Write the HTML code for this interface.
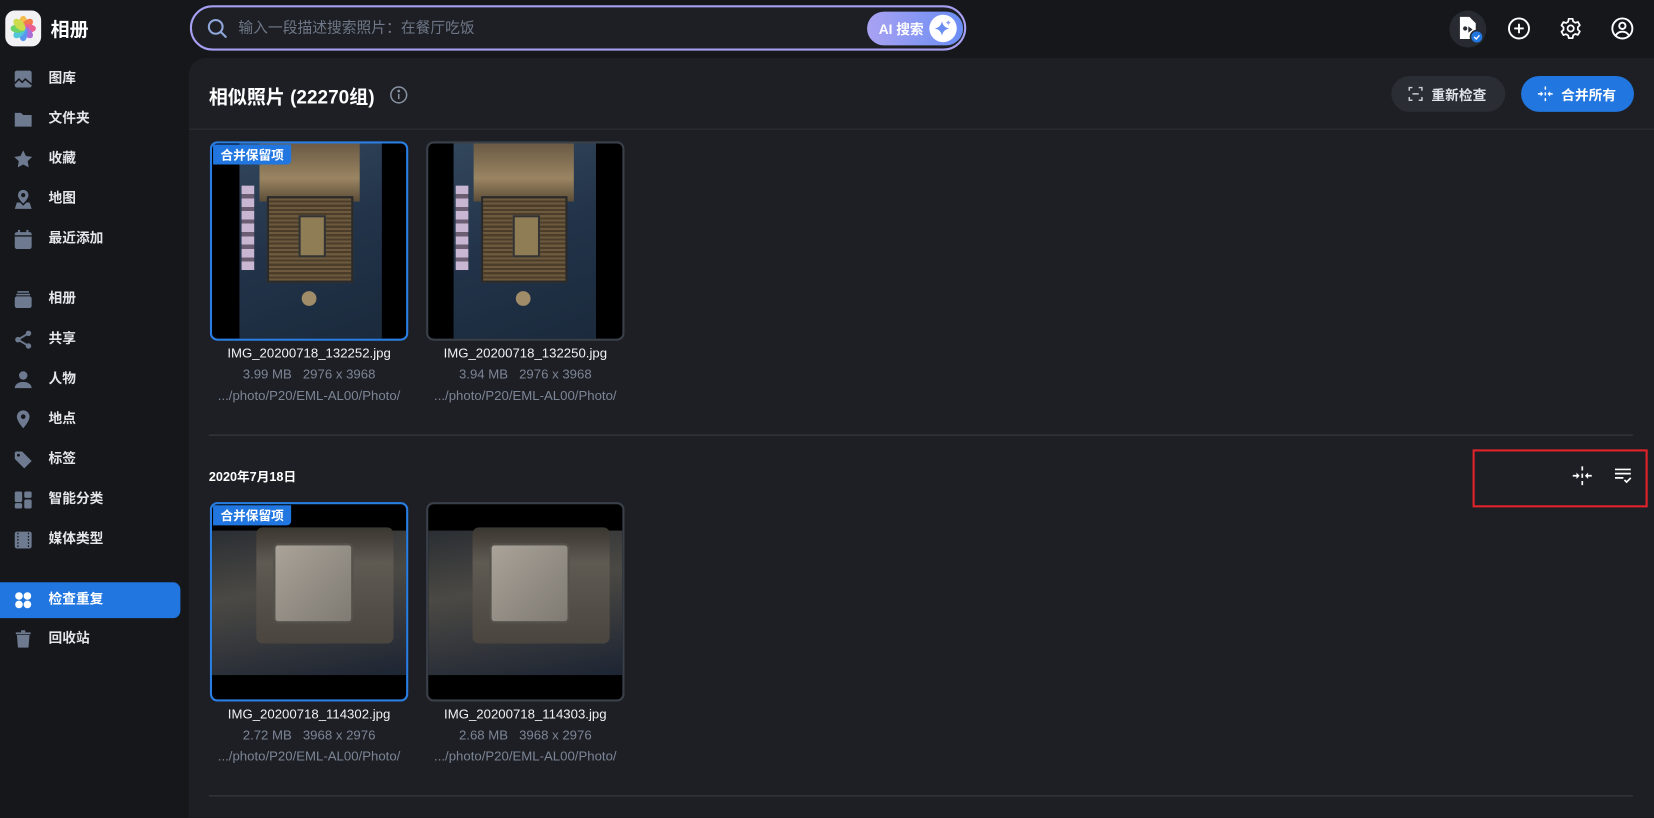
<!DOCTYPE html>
<html><head><meta charset="utf-8"><style>
*{box-sizing:border-box;margin:0;padding:0}
html,body{width:1654px;height:807px;overflow:hidden;background:#15171b}
#w{position:absolute;left:0;top:0;width:1568px;height:765px;transform:scale(1.05485);transform-origin:0 0;background:#15171b;font-family:"Liberation Sans","Noto Sans CJK SC",sans-serif;color:#e8eaee}
.a{position:absolute}
.nav{position:absolute;left:0;width:171px;height:34px;display:flex;align-items:center;font-size:13px;font-weight:bold;color:#e3e6ea}
.nav svg{position:absolute;left:12px;top:7px}
.nav span{position:absolute;left:46px;top:7px;line-height:18px}
.card{position:absolute;width:188px;height:189px;border:2px solid #3a404a;border-radius:7px;background:#000;overflow:hidden}
.card.sel{border-color:#2a7de1}
.badge{position:absolute;left:1px;top:1px;background:#2176e0;color:#fff;font-size:12px;font-weight:bold;padding:1px 7px;border-radius:0 0 4px 0;z-index:2}
.cap{position:absolute;width:220px;text-align:center;font-size:12.5px;line-height:20px}
.cap .n{color:#f0f2f5}
.cap .m{color:#7c8596}
.mb{position:absolute;background:linear-gradient(160deg,#32465c 0%,#223349 50%,#1b2a3c 100%)}
.sock{position:absolute;background:repeating-linear-gradient(0deg,#6d5a3e 0 2px,#4b3d2a 2px 4px),#5a4a33;border:2px solid #2a2a2a}
.cpu{position:absolute;background:linear-gradient(180deg,#3a3630,#5f5a52 30%,#4a463f)}
</style></head><body><div id="w">

<div class="a" style="left:5px;top:10px;width:34px;height:34px;border-radius:9px;background:#f2f2f4"></div>
<svg class="a" style="left:9px;top:14px" width="26" height="26" viewBox="0 0 26 26">
<g transform="translate(13 13)" opacity=".9">
<ellipse rx="4" ry="7" cy="-5" fill="#f6b73c"/>
<ellipse rx="4" ry="7" cy="-5" fill="#f36d3a" transform="rotate(45)"/>
<ellipse rx="4" ry="7" cy="-5" fill="#e94e8a" transform="rotate(90)"/>
<ellipse rx="4" ry="7" cy="-5" fill="#a35fd6" transform="rotate(135)"/>
<ellipse rx="4" ry="7" cy="-5" fill="#4a8ff0" transform="rotate(180)"/>
<ellipse rx="4" ry="7" cy="-5" fill="#3fc2d8" transform="rotate(225)"/>
<ellipse rx="4" ry="7" cy="-5" fill="#5fcf5a" transform="rotate(270)"/>
<ellipse rx="4" ry="7" cy="-5" fill="#c8d83a" transform="rotate(315)"/>
</g></svg>
<div class="a" style="left:48px;top:14px;font-size:18px;font-weight:bold;color:#fff">相册</div>

<div class="a" style="left:180px;top:5px;width:736px;height:43px;border:2px solid #a6a0f2;border-radius:22px;background:#1d1f24"></div>
<svg class="a" style="left:196px;top:17px" width="20" height="20" viewBox="0 0 20 20"><circle cx="8.5" cy="8.5" r="6.5" fill="none" stroke="#8fa6d8" stroke-width="2"/><path d="M13.5 13.5L18 18" stroke="#8fa6d8" stroke-width="2" stroke-linecap="round"/></svg>
<div class="a" style="left:226px;top:16px;font-size:14px;color:#6f7888">输入一段描述搜索照片：在餐厅吃饭</div>
<div class="a" style="left:822px;top:11px;width:91px;height:32px;border-radius:16px;background:linear-gradient(90deg,#a9a2f2,#6a8df4)"></div>
<div class="a" style="left:833px;top:17px;font-size:13px;font-weight:bold;color:#fff">AI 搜索</div>
<div class="a" style="left:881px;top:14px;width:26px;height:26px;border-radius:13px;background:#fff"></div>
<svg class="a" style="left:885px;top:18px" width="18" height="18" viewBox="0 0 18 18"><path d="M8 2Q9 8 15 9Q9 10 8 16Q7 10 1 9Q7 8 8 2Z" fill="#6a8df4"/><path d="M14 1Q14.5 3 16.5 3.5Q14.5 4 14 6Q13.5 4 11.5 3.5Q13.5 3 14 1Z" fill="#8f9cf3"/></svg>

<div class="a" style="left:1374px;top:10px;width:35px;height:35px;border-radius:18px;background:#272a30"></div>
<svg class="a" style="left:1382px;top:15px" width="26" height="28" viewBox="0 0 26 28"><path d="M2 1h9l6 6v15H2z" fill="#fff"/><circle cx="7" cy="12" r="2" fill="#272a30"/><path d="M10 10l4 3-4 3z" fill="#272a30"/><circle cx="18" cy="20" r="6" fill="#2176e0" stroke="#272a30" stroke-width="1.5"/><path d="M15.5 20l2 2 3-3.5" stroke="#fff" stroke-width="1.3" fill="none"/></svg>
<svg class="a" style="left:1429px;top:16px" width="22" height="22" viewBox="0 0 22 22" fill="none" stroke="#fff" stroke-width="1.8"><circle cx="11" cy="11" r="9.5"/><path d="M11 6.5v9M6.5 11h9"/></svg>
<svg class="a" style="left:1478px;top:16px" width="22" height="22" viewBox="0 0 24 24" fill="none" stroke="#fff" stroke-width="1.8"><path d="M10 2h4l.6 2.8 2.2 1.3 2.7-.9 2 3.5-2.1 1.9v2.6l2.1 1.9-2 3.5-2.7-.9-2.200 1.3L14 22h-4l-.6-2.8-2.2-1.3-2.7.9-2-3.5 2.1-1.9v-2.6L2.5 8.9l2-3.5 2.7.9 2.2-1.3z" stroke-linejoin="round"/><circle cx="12" cy="12" r="3.2"/></svg>
<svg class="a" style="left:1527px;top:16px" width="22" height="22" viewBox="0 0 22 22" fill="none" stroke="#fff" stroke-width="1.8"><circle cx="11" cy="11" r="9.5"/><circle cx="11" cy="8.5" r="3"/><path d="M4.8 17.5c1.5-2.5 3.5-3.5 6.2-3.5s4.7 1 6.2 3.5"/></svg>

<div class="nav" style="top:58px"><svg width="20" height="20" viewBox="0 0 20 20"><rect x="2" y="2" width="16" height="16" rx="2" fill="#6d7a90"/><path d="M2 14l4-4 3 3 3-3 6 5" stroke="#15171b" stroke-width="1.5" fill="none"/></svg><span>图库</span></div>
<div class="nav" style="top:96px"><svg width="20" height="20" viewBox="0 0 20 20"><path d="M2 4h6l2 2h8v11H2z" fill="#6d7a90"/></svg><span>文件夹</span></div>
<div class="nav" style="top:134px"><svg width="20" height="20" viewBox="0 0 20 20"><path d="M10 1.5l2.6 5.4 5.9.8-4.3 4.1 1 5.9L10 14.9l-5.2 2.8 1-5.9L1.5 7.7l5.9-.8z" fill="#6d7a90"/></svg><span>收藏</span></div>
<div class="nav" style="top:172px"><svg width="20" height="20" viewBox="0 0 20 20"><path d="M10 1a5 5 0 0 1 5 5c0 3.5-5 8-5 8S5 9.5 5 6a5 5 0 0 1 5-5z" fill="#6d7a90"/><circle cx="10" cy="6" r="2" fill="#15171b"/><path d="M2 19l2-6h3l3 3 3-3h3l2 6z" fill="#6d7a90"/></svg><span>地图</span></div>
<div class="nav" style="top:210px"><svg width="20" height="20" viewBox="0 0 20 20"><rect x="2" y="3" width="16" height="16" rx="2" fill="#6d7a90"/><rect x="5" y="1" width="2" height="4" fill="#6d7a90"/><rect x="13" y="1" width="2" height="4" fill="#6d7a90"/><rect x="2" y="6" width="16" height="1.3" fill="#15171b"/></svg><span>最近添加</span></div>
<div class="nav" style="top:267px"><svg width="20" height="20" viewBox="0 0 20 20"><rect x="2" y="7" width="16" height="11" rx="2" fill="#6d7a90"/><rect x="3.5" y="4.5" width="13" height="1.5" fill="#6d7a90"/><rect x="4.5" y="2" width="11" height="1.5" fill="#6d7a90"/></svg><span>相册</span></div>
<div class="nav" style="top:305px"><svg width="20" height="20" viewBox="0 0 20 20"><circle cx="15" cy="4" r="2.6" fill="#6d7a90"/><circle cx="5" cy="10" r="2.6" fill="#6d7a90"/><circle cx="15" cy="16" r="2.6" fill="#6d7a90"/><path d="M15 4L5 10l10 6" stroke="#6d7a90" stroke-width="1.8" fill="none"/></svg><span>共享</span></div>
<div class="nav" style="top:343px"><svg width="20" height="20" viewBox="0 0 20 20"><circle cx="10" cy="6" r="4" fill="#6d7a90"/><path d="M2 18c0-4 4-6 8-6s8 2 8 6z" fill="#6d7a90"/></svg><span>人物</span></div>
<div class="nav" style="top:381px"><svg width="20" height="20" viewBox="0 0 20 20"><path d="M10 1a6 6 0 0 1 6 6c0 4.5-6 11-6 11S4 11.5 4 7a6 6 0 0 1 6-6z" fill="#6d7a90"/><circle cx="10" cy="7" r="2.2" fill="#15171b"/></svg><span>地点</span></div>
<div class="nav" style="top:419px"><svg width="20" height="20" viewBox="0 0 20 20"><path d="M2 3v6l9 9 7-7-9-9H3z" fill="#6d7a90"/><circle cx="5.5" cy="5.5" r="1.4" fill="#15171b"/></svg><span>标签</span></div>
<div class="nav" style="top:457px"><svg width="20" height="20" viewBox="0 0 20 20"><rect x="2" y="2" width="7" height="10" rx="1.5" fill="#6d7a90"/><rect x="11" y="2" width="7" height="6" rx="1.5" fill="#6d7a90"/><rect x="2" y="13" width="7" height="5" rx="1.5" fill="#6d7a90"/><rect x="11" y="9.5" width="7" height="8.5" rx="1.5" fill="#6d7a90"/></svg><span>智能分类</span></div>
<div class="nav" style="top:495px"><svg width="20" height="20" viewBox="0 0 20 20"><rect x="2" y="2" width="16" height="16" rx="2" fill="#6d7a90"/><path d="M5 3v14M15 3v14" stroke="#15171b" stroke-width="1.2" stroke-dasharray="1.5 1.5"/></svg><span>媒体类型</span></div>
<div class="nav" style="top:552px;background:#2176e0;border-radius:0 7px 7px 0;color:#fff"><svg width="20" height="20" viewBox="0 0 20 20" fill="#fff"><circle cx="6" cy="6" r="3.6"/><circle cx="14" cy="6" r="3.6"/><circle cx="6" cy="14" r="3.6"/><circle cx="14" cy="14" r="3.6"/></svg><span>检查重复</span></div>
<div class="nav" style="top:589px"><svg width="20" height="20" viewBox="0 0 20 20"><path d="M4 6h12l-1 12H5z" fill="#6d7a90"/><rect x="3" y="3.5" width="14" height="1.8" fill="#6d7a90"/><rect x="8" y="1.5" width="4" height="2" fill="#6d7a90"/></svg><span>回收站</span></div>

<div class="a" style="left:179px;top:55px;width:1389px;height:720px;background:#1d1f24;border-radius:16px 0 0 0"></div>
<div class="a" style="left:198px;top:78px;font-size:18px;font-weight:bold;color:#fff">相似照片 (22270组)</div>
<svg class="a" style="left:369px;top:81px" width="18" height="18" viewBox="0 0 18 18" fill="none" stroke="#8a93a3" stroke-width="1.4"><circle cx="9" cy="9" r="7.5"/><path d="M9 8v5"/><circle cx="9" cy="5.3" r=".6" fill="#8a93a3"/></svg>
<div class="a" style="left:1319px;top:72px;width:108px;height:34px;border-radius:17px;background:#2a2d33"></div>
<svg class="a" style="left:1335px;top:82px" width="14" height="14" viewBox="0 0 14 14" fill="none" stroke="#c8ccd3" stroke-width="1.4"><path d="M1 4V1h3M10 1h3v3M13 10v3h-3M4 13H1v-3M4 7h6"/></svg>
<div class="a" style="left:1357px;top:80px;font-size:13px;font-weight:bold;color:#e0e3e8">重新检查</div>
<div class="a" style="left:1442px;top:72px;width:107px;height:34px;border-radius:17px;background:#2176e0"></div>
<svg class="a" style="left:1457px;top:82px" width="16" height="14" viewBox="0 0 16 14" fill="#fff"><rect x="7.3" y="0" width="1.4" height="3"/><rect x="7.3" y="5.5" width="1.4" height="3"/><rect x="7.3" y="11" width="1.4" height="3"/><path d="M1 6.3h2.5V4.5L6 7 3.5 9.5V7.7H1zM15 6.3h-2.5V4.5L10 7l2.5 2.5V7.7H15z"/></svg>
<div class="a" style="left:1480px;top:80px;font-size:13px;font-weight:bold;color:#fff">合并所有</div>
<div class="a" style="left:179px;top:122px;width:1389px;height:1px;background:#2c2f35"></div>

<div class="card sel" style="left:199px;top:134px"><div class="badge">合并保留项</div>
<div class="mb" style="left:26px;top:0;width:135px;height:185px"></div>
<div class="a" style="left:45px;top:0;width:95px;height:55px;background:linear-gradient(180deg,#6a5a44,#9a8562 60%,#5c4d38)"></div>
<div class="sock" style="left:52px;top:50px;width:82px;height:82px"></div>
<div class="a" style="left:82px;top:68px;width:26px;height:40px;background:#8f7d55;border:2px solid #333"></div>
<div class="a" style="left:28px;top:40px;width:12px;height:80px;background:repeating-linear-gradient(180deg,#c9b6d2 0 8px,#6b5e72 8px 12px)"></div>
<div class="a" style="left:85px;top:140px;width:14px;height:14px;border-radius:7px;background:#a08c68"></div>
</div>
<div class="card" style="left:404px;top:134px">
<div class="mb" style="left:24px;top:0;width:135px;height:185px"></div>
<div class="a" style="left:43px;top:0;width:95px;height:55px;background:linear-gradient(180deg,#6a5a44,#9a8562 60%,#5c4d38)"></div>
<div class="sock" style="left:50px;top:50px;width:82px;height:82px"></div>
<div class="a" style="left:80px;top:68px;width:26px;height:40px;background:#8f7d55;border:2px solid #333"></div>
<div class="a" style="left:26px;top:40px;width:12px;height:80px;background:repeating-linear-gradient(180deg,#c9b6d2 0 8px,#6b5e72 8px 12px)"></div>
<div class="a" style="left:83px;top:140px;width:14px;height:14px;border-radius:7px;background:#a08c68"></div>
</div>
<div class="cap" style="left:183px;top:325px"><div class="n">IMG_20200718_132252.jpg</div><div class="m">3.99 MB &nbsp; 2976 x 3968</div><div class="m">.../photo/P20/EML-AL00/Photo/</div></div>
<div class="cap" style="left:388px;top:325px"><div class="n">IMG_20200718_132250.jpg</div><div class="m">3.94 MB &nbsp; 2976 x 3968</div><div class="m">.../photo/P20/EML-AL00/Photo/</div></div>
<div class="a" style="left:198px;top:412px;width:1350px;height:1px;background:#3a3d44"></div>

<div class="a" style="left:198px;top:443px;font-size:12px;font-weight:bold;color:#fff">2020年7月18日</div>
<div class="a" style="left:1396px;top:426px;width:166px;height:55px;border:2px solid #e0232a"></div>
<svg class="a" style="left:1490px;top:442px" width="20" height="18" viewBox="0 0 20 18" fill="#fff"><rect x="9.2" y="0" width="1.6" height="4"/><rect x="9.2" y="7" width="1.6" height="4"/><rect x="9.2" y="14" width="1.6" height="4"/><path d="M1 8.2h3.5V6L7.5 9 4.5 12V9.8H1zM19 8.2h-3.5V6L12.5 9l3 3V9.8H19z"/></svg>
<svg class="a" style="left:1530px;top:443px" width="18" height="16" viewBox="0 0 18 16" fill="none" stroke="#fff" stroke-width="1.6"><path d="M1 2h15M1 6h15M1 10h8M10 12l2 2 4-4"/></svg>

<div class="card sel" style="left:199px;top:476px"><div class="badge">合并保留项</div>
<div class="a" style="left:0;top:25px;width:184px;height:137px;background:linear-gradient(170deg,#2a2e33,#4b4944 40%,#2c3038 80%,#1d2533)"></div>
<div class="cpu" style="left:42px;top:22px;width:130px;height:110px;border-radius:6px"></div>
<div class="a" style="left:58px;top:37px;width:76px;height:76px;border-radius:5px;background:linear-gradient(135deg,#a9a399,#7f7a72);border:2px solid #55524c"></div>
</div>
<div class="card" style="left:404px;top:476px">
<div class="a" style="left:0;top:25px;width:184px;height:137px;background:linear-gradient(170deg,#2a2e33,#4b4944 40%,#2c3038 80%,#1d2533)"></div>
<div class="cpu" style="left:42px;top:22px;width:130px;height:110px;border-radius:6px"></div>
<div class="a" style="left:58px;top:37px;width:76px;height:76px;border-radius:5px;background:linear-gradient(135deg,#a9a399,#7f7a72);border:2px solid #55524c"></div>
</div>
<div class="cap" style="left:183px;top:667px"><div class="n">IMG_20200718_114302.jpg</div><div class="m">2.72 MB &nbsp; 3968 x 2976</div><div class="m">.../photo/P20/EML-AL00/Photo/</div></div>
<div class="cap" style="left:388px;top:667px"><div class="n">IMG_20200718_114303.jpg</div><div class="m">2.68 MB &nbsp; 3968 x 2976</div><div class="m">.../photo/P20/EML-AL00/Photo/</div></div>
<div class="a" style="left:198px;top:754px;width:1350px;height:1px;background:#3a3d44"></div>

</div></body></html>
